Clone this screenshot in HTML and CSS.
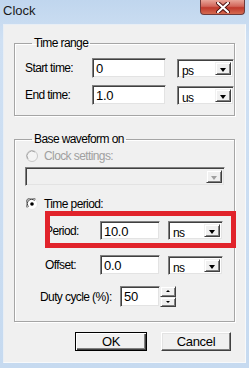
FILE: index.html
```html
<!DOCTYPE html>
<html lang="en">
<head>
    <meta charset="UTF-8">
    <meta name="viewport" content="width=device-width, initial-scale=1.0">
    <title>Clock</title>
    <link rel="stylesheet" href="styles.css">
</head>
<body>
    <div class="window">
        <div class="titlebar">
            <span class="title">Clock</span>
            <div class="close">
                <svg width="14" height="11" viewBox="0 0 14 11">
                    <path d="M2 1 L12 10 M12 1 L2 10" stroke="#4a1010" stroke-width="4" stroke-linecap="round"/>
                    <path d="M2 1 L12 10 M12 1 L2 10" stroke="#fff" stroke-width="2.2" stroke-linecap="round"/>
                </svg>
            </div>
        </div>

        <div class="client">
            <fieldset class="group range">
                <legend>Time range</legend>
                <div class="range-grid">
                    <label>Start time:</label>
                    <div class="edit">0</div>
                    <div class="combo"><span>ps</span><i class="drop"></i></div>
                    <label>End time:</label>
                    <div class="edit">1.0</div>
                    <div class="combo"><span>us</span><i class="drop"></i></div>
                </div>
            </fieldset>

            <fieldset class="group base">
                <legend>Base waveform on</legend>
                <div class="radio disabled">
                    <svg width="12" height="12" viewBox="0 0 12 12">
                        <circle cx="6" cy="6" r="5.5" fill="#f4f4f4" stroke="#c8c8c8"/>
                        <path d="M2 9 A5 5 0 0 1 9 2" fill="none" stroke="#a8a8a8"/>
                    </svg>
                    <span>Clock settings:</span>
                </div>
                <div class="combo wide disabled"><span></span><i class="drop"></i></div>
                <div class="radio checked">
                    <svg width="12" height="12" viewBox="0 0 12 12">
                        <circle cx="6" cy="6" r="5.5" fill="#fff" stroke="#e8e8e8"/>
                        <path d="M1.5 9.5 A5.3 5.3 0 0 1 9.5 1.5" fill="none" stroke="#808080" stroke-width="1.2"/>
                        <path d="M2.6 8.6 A4.2 4.2 0 0 1 8.6 2.6" fill="none" stroke="#404040"/>
                        <circle cx="6" cy="6" r="1.8" fill="#000"/>
                    </svg>
                    <span>Time period:</span>
                </div>
                <div class="period-grid">
                    <label>Period:</label>
                    <div class="edit">10.0</div>
                    <div class="combo"><span>ns</span><i class="drop"></i></div>
                </div>
                <div class="period-grid offset">
                    <label>Offset:</label>
                    <div class="edit">0.0</div>
                    <div class="combo"><span>ns</span><i class="drop"></i></div>
                </div>
                <div class="duty">
                    <label>Duty cycle (%):</label>
                    <div class="edit short">50</div>
                    <div class="spin">
                        <i class="up"></i>
                        <i class="down"></i>
                    </div>
                </div>
            </fieldset>

            <div class="buttons">
                <button class="default">OK</button>
                <button>Cancel</button>
            </div>
        </div>

        <div class="highlight"></div>
    </div>
</body>
</html>
```

FILE: styles.css
```css
body {
    margin: 0;
    font-family: "Liberation Sans", Arial, sans-serif;
    font-size: 12px;
    letter-spacing: -0.6px;
}
.window {
    position: relative;
    width: 249px;
    height: 368px;
    background: linear-gradient(#c0d6ee, #cfe0f3 40px, #c6daf0);
    box-sizing: border-box;
    padding: 0 3px;
}
.titlebar {
    height: 24px;
    display: flex;
    align-items: flex-start;
    justify-content: space-between;
}
.title {
    font-size: 13px;
    letter-spacing: 0;
    color: #1a1a1a;
    margin: 3px 0 0 0;
}
.close {
    width: 45px;
    height: 15px;
    margin-right: 1px;
    box-sizing: border-box;
    border: 1px solid #6e3a3a;
    border-top: none;
    border-radius: 0 0 4px 4px;
    background: linear-gradient(#e8a498, #d2665a 45%, #c0392c 55%, #d46a50);
    display: flex;
    align-items: center;
    justify-content: center;
}
.client {
    height: 339px;
    box-sizing: border-box;
    background: #f0f0f0;
    border: 1px solid;
    border-color: #e8eef5 #f7f9fb #f7f9fb #e8eef5;
    padding: 11px 9px 0 10px;
}
.group {
    margin: 0;
    padding: 8px 10px 10px 10px;
    border: 1px solid #a5a5a5;
    box-shadow: 1px 1px 0 #fff, inset 1px 1px 0 #fff;
    min-width: 0;
    width: 221px;
    box-sizing: border-box;
}
.group legend {
    padding: 0 2px;
    margin-left: 7px;
    line-height: 14px;
}
label {
    color: #000;
    white-space: nowrap;
}
.range-grid {
    display: grid;
    grid-template-columns: 56px 74px 57px;
    grid-template-rows: 20px 20px;
    column-gap: 11px;
    row-gap: 7px;
    align-items: center;
}
.edit {
    height: 20px;
    box-sizing: border-box;
    background: #fff;
    border: 1px solid;
    border-color: #808080 #f0f0f0 #f0f0f0 #808080;
    box-shadow: inset 1px 1px 0 #404040, inset -1px -1px 0 #e3e3e3;
    padding: 1px 3px 0 3px;
    line-height: 17px;
    font-size: 13px;
    letter-spacing: -0.3px;
}
.combo {
    height: 19px;
    box-sizing: border-box;
    background: #fff;
    border: 1px solid;
    border-color: #808080 #f0f0f0 #f0f0f0 #808080;
    box-shadow: inset 1px 1px 0 #404040, inset -1px -1px 0 #e3e3e3;
    display: flex;
    align-items: stretch;
    justify-content: space-between;
    padding: 2px 2px 2px 4px;
}
.combo span {
    line-height: 15px;
    padding-top: 2px;
}
.drop {
    width: 16px;
    box-sizing: border-box;
    background: #f0f0f0;
    border: 1px solid;
    border-color: #f0f0f0 #404040 #404040 #f0f0f0;
    box-shadow: inset 1px 1px 0 #fff, inset -1px -1px 0 #808080;
    position: relative;
}
.drop::after {
    content: "";
    position: absolute;
    left: 4px;
    top: 5px;
    border-left: 3.5px solid transparent;
    border-right: 3.5px solid transparent;
    border-top: 4px solid #000;
}
.combo.wide {
    width: 200px;
    height: 19px;
    margin-top: 4px;
    background: #f0f0f0;
}
.combo.disabled .drop::after {
    border-top-color: #a0a0a0;
}
.radio {
    display: flex;
    align-items: center;
    gap: 6px;
    height: 14px;
    margin-left: 1px;
}
.radio.disabled {
    color: #a0a0a0;
    margin-top: -1px;
}
.radio.checked {
    margin-top: 11px;
}
.radio svg {
    display: block;
}
.period-grid {
    display: grid;
    grid-template-columns: 47px 60px 55px;
    column-gap: 8px;
    align-items: center;
    margin: 10px 0 0 20px;
}
.period-grid .edit {
    height: 19px;
}
.period-grid .combo {
    height: 19px;
}
.period-grid.offset {
    margin-top: 15px;
}
.period-grid.offset .edit {
    height: 20px;
}
.duty {
    display: flex;
    align-items: center;
    margin: 11px 0 0 15px;
}
.duty label {
    width: 80px;
}
.edit.short {
    width: 40px;
    height: 21px;
}
.spin {
    display: flex;
    flex-direction: column;
    width: 16px;
    height: 21px;
}
.spin i {
    flex: 1;
    background: #f0f0f0;
    box-sizing: border-box;
    border: 1px solid;
    border-color: #f0f0f0 #404040 #404040 #f0f0f0;
    box-shadow: inset 1px 1px 0 #fff, inset -1px -1px 0 #808080;
    position: relative;
}
.spin i::after {
    content: "";
    position: absolute;
    left: 5px;
    top: 3px;
    border-left: 2px solid transparent;
    border-right: 2px solid transparent;
}
.spin .up::after {
    border-bottom: 2px solid #000;
}
.spin .down::after {
    border-top: 2px solid #000;
}
.group.base {
    margin-top: 16px;
    padding-top: 4px;
    padding-bottom: 14px;
}
.buttons {
    display: flex;
    justify-content: flex-end;
    gap: 14px;
    margin-top: 10px;
    padding-right: 5px;
}
button {
    font-family: "Liberation Sans", Arial, sans-serif;
    font-size: 13px;
    letter-spacing: -0.3px;
    width: 70px;
    height: 19px;
    padding: 0;
    background: #f0f0f0;
    border: 1px solid;
    border-color: #fff #404040 #404040 #fff;
    box-shadow: inset -1px -1px 0 #808080, inset 1px 1px 0 #e3e3e3;
    color: #000;
}
button.default {
    width: 72px;
    border: 1px solid #000;
    box-shadow: inset 1px 1px 0 #fff, inset -1px -1px 0 #404040, inset -2px -2px 0 #808080;
}
.highlight {
    position: absolute;
    left: 45px;
    top: 211px;
    width: 191px;
    height: 37px;
    box-sizing: border-box;
    border: 5px solid #e1232b;
}
```
